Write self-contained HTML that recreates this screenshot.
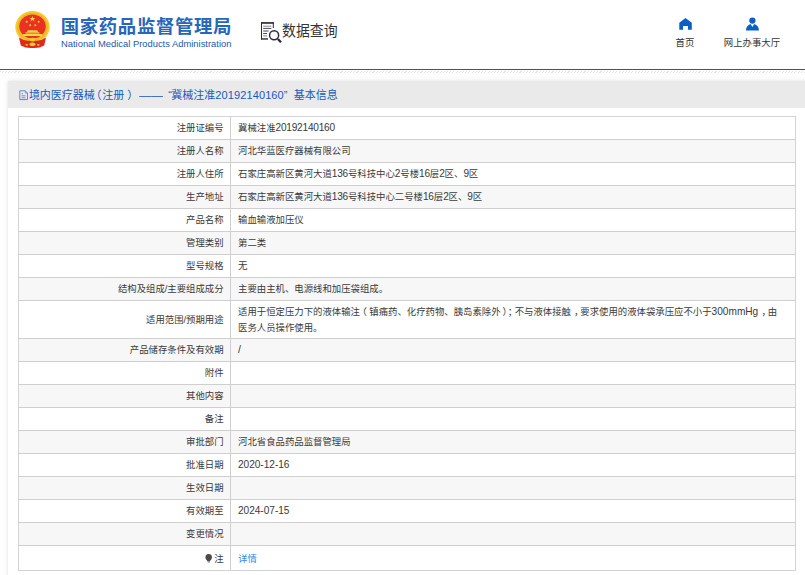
<!DOCTYPE html>
<html lang="zh-CN">
<head>
<meta charset="utf-8">
<title>国家药品监督管理局 数据查询</title>
<style>
*{box-sizing:border-box;margin:0;padding:0}
html,body{width:805px;height:575px;overflow:hidden;background:#fefefe;}
body{position:relative;font-family:"Liberation Sans","Noto Sans CJK SC",sans-serif;color:#333;}
.hdr{position:absolute;left:0;top:0;width:805px;height:69px;background:#fff;}
.blue{position:absolute;left:0;top:68.6px;width:805px;height:1.45px;background:#0d5fc0;}
.hatch{position:absolute;left:0;top:70.9px;width:805px;height:2.3px;background:repeating-linear-gradient(135deg,#e3e3e3 0,#e3e3e3 0.8px,#fefefe 0.8px,#fefefe 2.26px);}
.emblem{position:absolute;left:8px;top:6px;width:50px;height:50px;}
.t1{position:absolute;left:60.7px;top:13.5px;font-size:18.4px;line-height:26px;font-weight:700;color:#2766bc;white-space:nowrap;letter-spacing:0.66px;}
.t2{position:absolute;left:61px;top:37.5px;font-size:9.4px;line-height:12px;color:#1b5aad;white-space:nowrap;}
.qicon{position:absolute;left:256px;top:16px;width:34px;height:32px;}
.qtxt{position:absolute;left:281.6px;top:20px;font-size:15.1px;line-height:22px;color:#333;white-space:nowrap;transform:scaleX(0.92);transform-origin:0 50%;}
.nav{position:absolute;top:36.6px;text-align:center;font-size:9.4px;line-height:12px;color:#333;white-space:nowrap;}
.nav svg{display:block;margin:0 auto 6.4px;}
.card{position:absolute;left:7.6px;top:81px;width:810px;height:520px;background:#fff;box-shadow:0 0 4px rgba(0,0,0,.12);}
.chead{position:absolute;left:0;top:0;width:100%;height:27px;background:#eaeaea;}
.ctitle{position:absolute;left:11.7px;top:5.8px;font-size:11px;line-height:17px;color:#1759c0;white-space:nowrap;}
table{position:absolute;left:18px;top:116px;width:778px;border-collapse:collapse;font-size:9.4px;line-height:15px;color:#3a3a3a;table-layout:fixed;}
td{border:1px solid #cfcfcf;height:23px;padding:0 7px 1.6px;vertical-align:middle;}
td.l{width:212px;text-align:right;padding-right:6.4px;}
tr:nth-child(even) td{background:#f7f7f7;}
td:first-child{border-left-color:#d3d3d9;}td:last-child{border-right-color:#d3d3d9;}tr:first-child td{border-top-color:#d3d3d9;}tr:last-child td{border-bottom-color:#d3d3d9;}
.n{font-size:10.1px;letter-spacing:-0.22px;}
.pc{position:relative;}
.hp{font-feature-settings:"halt" 1;}
a{color:#3585f2;text-decoration:none;}
</style>
</head>
<body>
<div class="hdr"></div>
<div class="blue"></div>
<div class="hatch"></div>

<svg class="emblem" viewBox="8 6 50 50">
 <ellipse cx="32.5" cy="27" rx="17.2" ry="15.9" fill="#f6c92f"/>
 <ellipse cx="32.5" cy="27" rx="14.6" ry="13.3" fill="none" stroke="#eeb41a" stroke-width="1.2"/>
 <ellipse cx="32.5" cy="26.5" rx="13.3" ry="12" fill="#e9321f"/>
 <path d="M19 37.6 Q24.5 41.5 30 40.6 L35 40.6 Q40.5 41.5 46 37.6 L44.2 45.4 Q38.5 48.6 32.5 47.9 Q26.5 48.6 20.8 45.4 Z" fill="#dc2a1c"/>
 <path d="M23 34h19v1.9H23z M25.6 32.2h13.8v1.4H25.6z M27.8 30.2h9.4l0.8 1.8H27z" fill="#f8d648"/>
 
 <ellipse cx="32.5" cy="39.6" rx="3" ry="1.9" fill="#f6c92f"/>
 <ellipse cx="32.5" cy="44.2" rx="3" ry="1.8" fill="#f6c92f"/>
 <rect x="25.6" y="44" width="2.2" height="1.6" fill="#f3c22a"/><rect x="37.2" y="44" width="2.2" height="1.6" fill="#f3c22a"/>
 <polygon transform="translate(32.4 19) scale(0.62)" points="0,-5 1.2,-1.6 4.8,-1.6 1.9,0.5 3,3.9 0,1.8 -3,3.9 -1.9,0.5 -4.8,-1.6 -1.2,-1.6" fill="#f8d648"/>
 <circle cx="26.7" cy="21.7" r="1" fill="#f8d648"/><circle cx="38.7" cy="21.7" r="1" fill="#f8d648"/>
 <circle cx="30.2" cy="25.2" r="1" fill="#f8d648"/><circle cx="35.3" cy="25.2" r="1" fill="#f8d648"/>
</svg>
<div class="t1">国家药品监督管理局</div>
<div class="t2">National Medical Products Administration</div>

<svg class="qicon" viewBox="256 16 34 32">
 <path d="M261 22.95H273.8" stroke="#2b2b3d" stroke-width="1.7" fill="none"/>
 <path d="M261.5 22.2V39.6" stroke="#2b2b3d" stroke-width="1" fill="none"/>
 <path d="M273.3 22.2V28" stroke="#2b2b3d" stroke-width="1" fill="none"/>
 <path d="M261 38.95H268" stroke="#2b2b3d" stroke-width="1.4" fill="none"/>
 <path d="M263.2 26.2H271.4" stroke="#8b8b96" stroke-width="1"/>
 <path d="M263.2 28.4H271.4" stroke="#3a3a4a" stroke-width="0.9"/>
 <path d="M263.2 31H268.6" stroke="#6f6f7c" stroke-width="1.3"/>
 <path d="M263.2 33.5H267" stroke="#3a3a4a" stroke-width="0.9"/>
 <path d="M263.2 35.9H267" stroke="#8b8b96" stroke-width="1.1"/>
 <circle cx="274.1" cy="35.2" r="4.55" fill="#fff" stroke="#2b2b3d" stroke-width="1.45"/>
 <path d="M277.9 39L281 42.2" stroke="#2b2b3d" stroke-width="2.3" fill="none"/>
</svg>
<div class="qtxt">数据查询</div>

<svg style="position:absolute;left:670px;top:12px" width="30" height="24" viewBox="670 12 30 24"><path d="M685.45 17.9L691.8 22.8V29.75H687.95V26H683.05V29.75H679.3V22.8Z" fill="#0b60c6"/></svg>
<svg style="position:absolute;left:737px;top:12px" width="30" height="24" viewBox="737 12 30 24"><circle cx="752.4" cy="20.55" r="3.15" fill="#0b60c6"/><path d="M745.9 30.4Q746.3 25.6 750.6 24.1L752.4 26.9L754.2 24.1Q758.6 25.6 759 30.4Z" fill="#0b60c6"/></svg>
<div class="nav" style="left:665px;width:40px;">首页</div>
<div class="nav" style="left:717px;width:70px;">网上办事大厅</div>

<div class="card">
 <div class="chead"></div>
 <div class="ctitle"><svg width="9" height="10.4" viewBox="19 89.7 9 10.4" style="vertical-align:-1.9px;margin-right:0.6px" fill="none" stroke="#4f74cf" stroke-width="0.85"><path d="M19.8 90.5h5.5l2.2 2.3v6.5h-7.7z"/><path d="M25.3 90.5v2.3h2.2" stroke-width="0.6"/><path d="M21.6 93.4h1.4M21.6 95.5h3.9M21.6 97.5h3.9" stroke-width="0.75"/></svg>境内医疗器械<span class="hp" style="margin:0 0.9px 0 1px">（</span>注册<span class="hp" style="margin:0 6px 0 3.1px">）</span><span style="display:inline-block;transform:scaleX(1.09);transform-origin:0 50%;margin-right:2px">——</span><span style="margin-left:5.4px;margin-right:-0.7px">“</span>冀械注准<span style="letter-spacing:.12px">20192140160</span><span style="margin-right:6.3px">”</span>基本信息</div>
</div>

<table>
<tr><td class="l">注册证编号</td><td>冀械注准<span class="n">20192140160</span></td></tr>
<tr><td class="l">注册人名称</td><td>河北华蓝医疗器械有限公司</td></tr>
<tr><td class="l">注册人住所</td><td>石家庄高新区黄河大道<span class="n">136</span>号科技中心<span class="n">2</span>号楼<span class="n">16</span>层<span class="n">2</span>区、<span class="n">9</span>区</td></tr>
<tr><td class="l">生产地址</td><td>石家庄高新区黄河大道<span class="n">136</span>号科技中心二号楼<span class="n">16</span>层<span class="n">2</span>区、<span class="n">9</span>区</td></tr>
<tr><td class="l">产品名称</td><td>输血输液加压仪</td></tr>
<tr><td class="l">管理类别</td><td>第二类</td></tr>
<tr><td class="l">型号规格</td><td>无</td></tr>
<tr><td class="l">结构及组成/主要组成成分</td><td>主要由主机、电源线和加压袋组成。</td></tr>
<tr><td class="l" style="height:38px;padding:0.6px 6.4px 0 7px">适用范围/预期用途</td><td style="line-height:15.65px;padding:0.6px 7px 0">适用于恒定压力下的液体输注<span class="pc" style="left:-2.4px">（</span>镇痛药、化疗药物、胰岛素除外<span class="pc" style="left:2px">）</span><span class="pc" style="left:2.6px">；</span>不与液体接触<span class="pc" style="left:3px">，</span>要求使用的液体袋承压应不小于<span class="n" style="letter-spacing:.02px">300mmHg</span><span class="pc" style="left:3.2px">，</span>由<br>医务人员操作使用。</td></tr>
<tr><td class="l">产品储存条件及有效期</td><td><span class="n" style="font-size:10.6px;position:relative;top:0.5px">/</span></td></tr>
<tr><td class="l">附件</td><td></td></tr>
<tr><td class="l">其他内容</td><td></td></tr>
<tr><td class="l">备注</td><td></td></tr>
<tr><td class="l">审批部门</td><td>河北省食品药品监督管理局</td></tr>
<tr><td class="l">批准日期</td><td><span class="n" style="letter-spacing:-0.02px">2020-12-16</span></td></tr>
<tr><td class="l">生效日期</td><td></td></tr>
<tr><td class="l">有效期至</td><td><span class="n" style="letter-spacing:-0.02px">2024-07-15</span></td></tr>
<tr><td class="l">变更情况</td><td></td></tr>
<tr><td class="l" style="height:24.8px;padding:1.2px 6.4px 0 7px"><svg width="7.4" height="8.8" viewBox="0 0 7.4 8.8" style="vertical-align:-1.2px;margin-right:1.4px"><circle cx="3.7" cy="3.3" r="3.2" fill="#4a4a4a"/><path d="M1.5 5.4L2.6 7.4h2.2L5.9 5.4z" fill="#4a4a4a"/><path d="M2.6 7.5h2.2v1.1H2.6z" fill="#8a8a8a"/></svg>注</td><td style="padding:1.2px 7px 0"><a>详情</a></td></tr>
</table>
</body>
</html>
